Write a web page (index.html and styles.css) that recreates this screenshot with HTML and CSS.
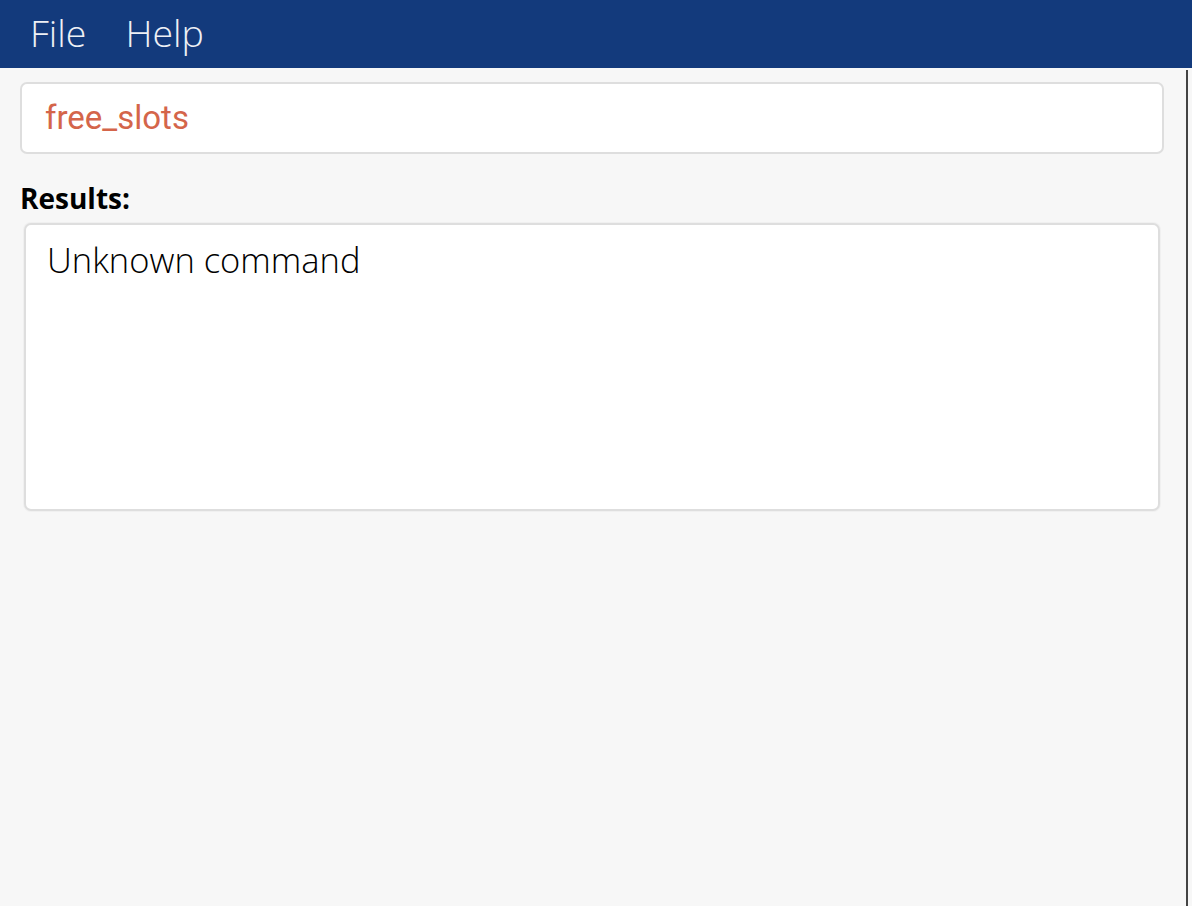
FILE: index.html
```html
<!DOCTYPE html>
<html>
<head>
<meta charset="utf-8">
<link rel="stylesheet" href="styles.css">
</head>
<body>
<header class="menubar">
  <span class="menu-item">File</span>
  <span class="menu-item">Help</span>
</header>
<div class="main">
  <div class="content">
    <div class="command-box"><span class="command-text">free_slots</span></div>
    <div class="results-label">Results:</div>
    <div class="results-box"><div class="results-text">Unknown command</div></div>
  </div>
  <div class="edge"></div>
</div>
</body>
</html>
```
FILE: styles.css
```css
html, body {
  margin: 0;
  padding: 0;
  height: 100%;
}
body {
  background: #f7f7f7;
  display: flex;
  flex-direction: column;
  font-family: "Open Sans", sans-serif;
}
.menubar {
  height: 68px;
  background: #133a7c;
  display: flex;
  align-items: center;
  padding-left: 30px;
  gap: 39px;
  box-sizing: border-box;
}
.menu-item {
  color: #eef0f5;
  font-size: 37.5px;
  font-weight: 300;
  line-height: 1;
  margin-top: -2px;
}
.main {
  flex: 1;
  display: flex;
  padding-top: 2px;
}
.content {
  flex: 1;
  padding: 12px 22px 0 20px;
}
.edge {
  width: 2px;
  background: #444;
  margin-right: 4px;
}
.command-box {
  height: 72px;
  box-sizing: border-box;
  border: 2px solid #dedede;
  border-radius: 7px;
  background: #fff;
  display: flex;
  align-items: center;
  padding-left: 23px;
}
.command-text {
  font-family: Roboto, "Liberation Sans", sans-serif;
  color: #d4654a;
  font-size: 33px;
  margin-top: -2px;
}
.results-label {
  font-weight: 700;
  font-size: 28px;
  line-height: 1;
  margin: 30px 0 0 0;
  color: #000;
}
.results-box {
  margin: 11px 4px 0 4px;
  height: 288px;
  box-sizing: border-box;
  border: 2px solid #dedede;
  border-radius: 7px;
  box-shadow: 0 0 0 1px #f0f0f0;
  background: #fff;
  padding: 14px 21px;
}
.results-text {
  font-size: 34.5px;
  font-weight: 300;
  line-height: 1.2;
  color: #000;
}
```
